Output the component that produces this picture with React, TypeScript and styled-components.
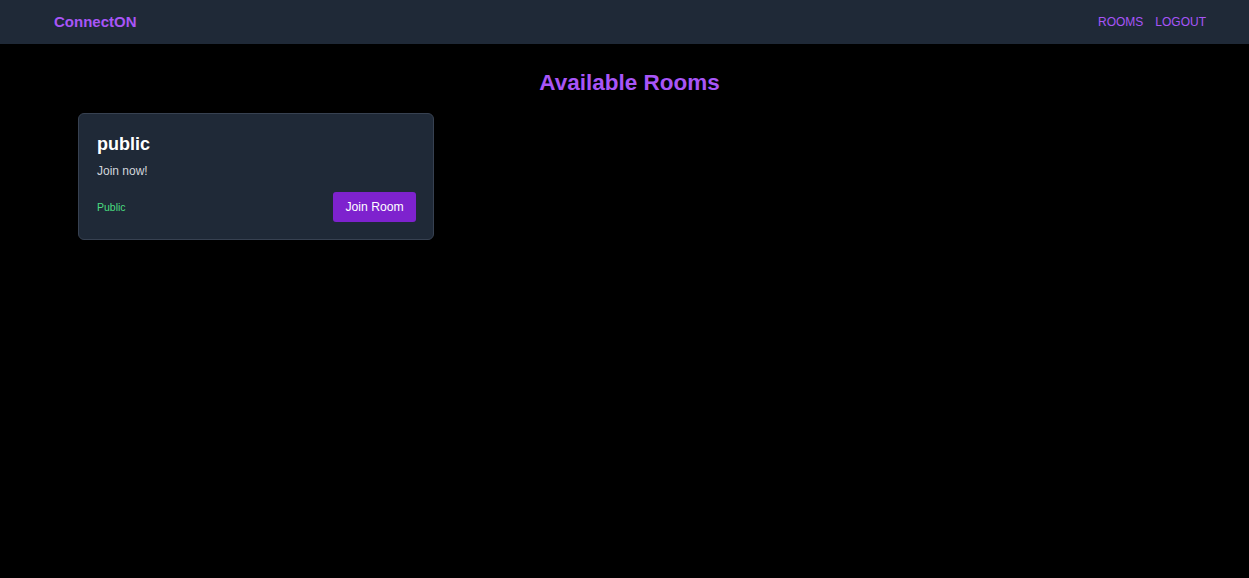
import React from "react";
import styled, { createGlobalStyle } from "styled-components";

const GlobalStyle = createGlobalStyle`
  html, body {
    margin: 0;
    padding: 0;
    background: #000000;
    font-family: "Liberation Sans", Arial, Helvetica, sans-serif;
  }
  * { box-sizing: border-box; }
`;

const Page = styled.div`
  min-height: 578px;
  background: #000000;
`;

const NavBar = styled.nav`
  height: 44px;
  background: #1f2937;
  display: flex;
  align-items: center;
  justify-content: space-between;
  padding: 0 43px 0 54px;
`;

const Logo = styled.div`
  color: #a855f7;
  font-size: 15px;
  font-weight: 700;
  line-height: 20px;
`;

const NavLinks = styled.div`
  display: flex;
  align-items: center;
  gap: 12px;
`;

const NavLink = styled.a`
  color: #a855f7;
  font-size: 12px;
  line-height: 16px;
  text-decoration: none;
  text-transform: uppercase;
  cursor: pointer;
`;

const Main = styled.main`
  padding: 23px 68px 0 78px;
`;

const Title = styled.h1`
  margin: 0 0 14px;
  text-align: center;
  color: #a855f7;
  font-size: 22.5px;
  line-height: 32px;
  font-weight: 700;
`;

const Grid = styled.div`
  display: grid;
  grid-template-columns: repeat(3, 1fr);
  gap: 18px;
`;

const Card = styled.div`
  background: #1f2937;
  border: 1px solid #374151;
  border-radius: 6px;
  padding: 16px 17px 17px 18px;
`;

const RoomName = styled.h3`
  margin: 0 0 5px;
  color: #ffffff;
  font-size: 18px;
  line-height: 28px;
  font-weight: 700;
`;

const RoomDesc = styled.p`
  margin: 0;
  color: #d1d5db;
  font-size: 12px;
  line-height: 16px;
`;

const CardFooter = styled.div`
  margin-top: 13px;
  display: flex;
  align-items: center;
  justify-content: space-between;
`;

const Badge = styled.span<{ $public: boolean }>`
  color: ${(p) => (p.$public ? "#4ade80" : "#f87171")};
  font-size: 10.5px;
  line-height: 14px;
`;

const JoinButton = styled.button`
  height: 30px;
  padding: 0 12px;
  border: none;
  border-radius: 3px;
  background: #7e22ce;
  color: #ffffff;
  font-family: inherit;
  font-size: 12.2px;
  line-height: 16px;
  cursor: pointer;
`;

const rooms = [{ name: "public", description: "Join now!", isPublic: true }];

export default function App() {
  return (
    <Page>
      <GlobalStyle />
      <NavBar>
        <Logo>ConnectON</Logo>
        <NavLinks>
          <NavLink>Rooms</NavLink>
          <NavLink>Logout</NavLink>
        </NavLinks>
      </NavBar>
      <Main>
        <Title>Available Rooms</Title>
        <Grid>
          {rooms.map((r) => (
            <Card key={r.name}>
              <RoomName>{r.name}</RoomName>
              <RoomDesc>{r.description}</RoomDesc>
              <CardFooter>
                <Badge $public={r.isPublic}>{r.isPublic ? "Public" : "Private"}</Badge>
                <JoinButton>Join Room</JoinButton>
              </CardFooter>
            </Card>
          ))}
        </Grid>
      </Main>
    </Page>
  );
}
